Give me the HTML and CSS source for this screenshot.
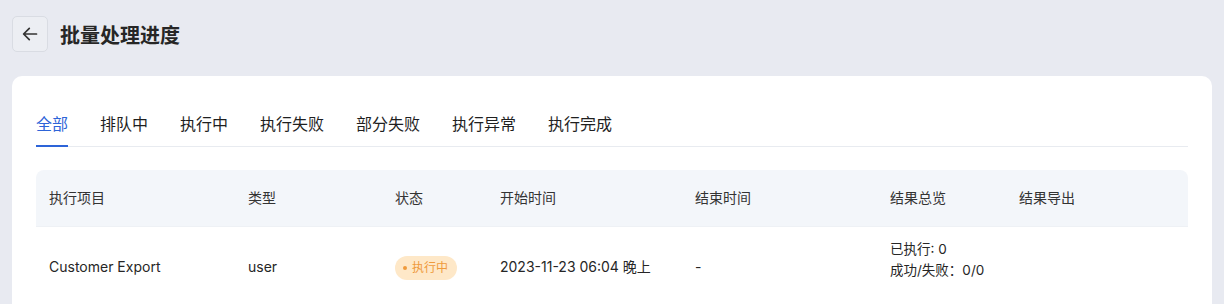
FILE: index.html
```html
<!DOCTYPE html>
<html lang="zh">
<head>
<meta charset="utf-8">
<link rel="stylesheet" href="styles.css">
</head>
<body>
<div class="page">
  <header class="topbar">
    <button class="back" aria-label="返回">
      <svg width="20" height="20" viewBox="0 0 20 20" fill="none" stroke="#333" stroke-width="1.7" stroke-linecap="round" stroke-linejoin="round"><path d="M16.5 10H3.8M9.3 4.3L3.6 10l5.7 5.7"/></svg>
    </button>
    <h1 class="title">批量处理进度</h1>
  </header>
  <section class="card">
    <nav class="tabs">
      <span class="tab active">全部</span>
      <span class="tab">排队中</span>
      <span class="tab">执行中</span>
      <span class="tab">执行失败</span>
      <span class="tab">部分失败</span>
      <span class="tab">执行异常</span>
      <span class="tab">执行完成</span>
    </nav>
    <div class="table">
      <div class="row head">
        <div class="c c1">执行项目</div>
        <div class="c c2">类型</div>
        <div class="c c3">状态</div>
        <div class="c c4">开始时间</div>
        <div class="c c5">结束时间</div>
        <div class="c c6">结果总览</div>
        <div class="c c7">结果导出</div>
      </div>
      <div class="row body">
        <div class="c c1">Customer Export</div>
        <div class="c c2">user</div>
        <div class="c c3"><span class="badge"><i class="dot"></i>执行中</span></div>
        <div class="c c4">2023-11-23 06:04 晚上</div>
        <div class="c c5">-</div>
        <div class="c c6 summary"><span>已执行: 0</span><span>成功/失败：0/0</span></div>
        <div class="c c7"></div>
      </div>
    </div>
  </section>
</div>
</body>
</html>
```
FILE: styles.css
```css
* { box-sizing: border-box; }
html, body { margin: 0; padding: 0; }
body {
  background: #e8eaf1;
  font-family: Inter, "Noto Sans CJK SC", sans-serif;
  color: #262626;
  width: 1224px;
  height: 304px;
  overflow: hidden;
}
.page { padding: 16px 12px 0 12px; }
.topbar { display: flex; align-items: center; gap: 12px; height: 36px; }
.back {
  width: 36px; height: 36px;
  border: 1px solid #d9dce3;
  border-radius: 5px;
  background: #eceef3;
  display: flex; align-items: center; justify-content: center;
  padding: 0;
}
.title {
  margin: 0;
  font-size: 20px;
  font-weight: 700;
  color: #262626;
}
.card {
  margin-top: 24px;
  background: #fff;
  border-radius: 10px;
  padding: 24px 24px 0 24px;
  height: 240px;
}
.tabs {
  display: flex;
  gap: 32px;
  border-bottom: 1px solid #e8ebf0;
  height: 47px;
  padding-top: 12px;
}
.tab {
  font-size: 16px;
  line-height: 24px;
  font-weight: 400;
  color: #1f1f1f;
  height: 35px;
}
.tab.active {
  color: #2d64d8;
  border-bottom: 2px solid #2d64d8;
}
.table { margin-top: 23px; border-radius: 8px 8px 0 0; overflow: hidden; }
.row { display: flex; }
.row.head { background: #f3f6fa; height: 57px; align-items: center; border-bottom: 1px solid #eef1f5; }
.row.body { height: 80px; align-items: center; }
.c { padding-left: 13px; font-size: 14px; line-height: 20px; color: #262626; }
.head .c { color: #333; }
.c1 { width: 199px; }
.c2 { width: 147px; }
.c3 { width: 105px; }
.c4 { width: 195px; }
.c5 { width: 195px; }
.c6 { width: 129px; }
.c7 { flex: 1; }
.badge {
  display: inline-flex; align-items: center; gap: 5px;
  background: #fee8c8;
  color: #ef9a3c;
  font-size: 12px;
  height: 24px;
  padding: 0 9px 0 8px;
  border-radius: 12px;
}
.dot { width: 4px; height: 4px; border-radius: 50%; background: #ef9a3c; display: inline-block; }
.summary { display: flex; flex-direction: column; font-size: 13.5px; line-height: 21px; margin-bottom: 15px; }
```
